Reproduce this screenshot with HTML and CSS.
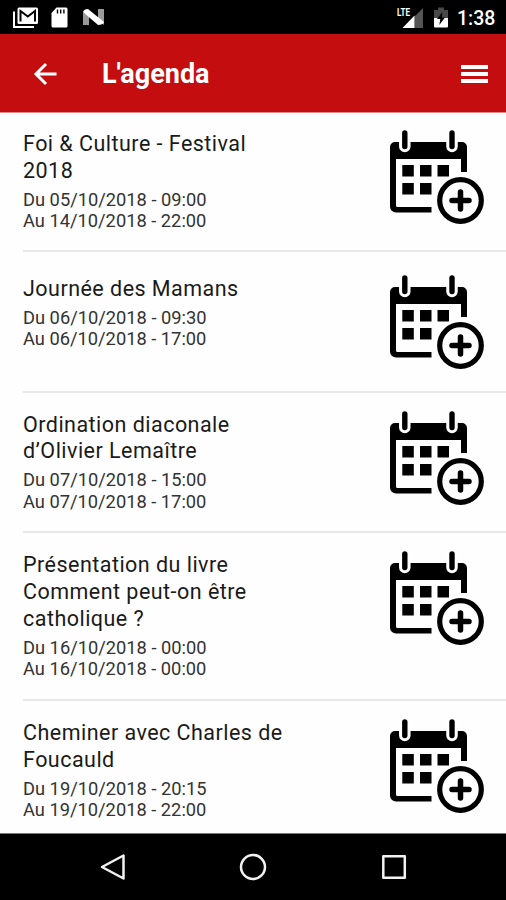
FILE: index.html
```html
<!DOCTYPE html>
<html lang="fr">

<head>
    <meta charset="UTF-8">
    <meta name="viewport" content="width=device-width, initial-scale=1.0">
    <title>L'agenda</title>
    <link rel="stylesheet" href="styles.css">
</head>

<body>
    <!-- Calendar icon shared by all the events -->
    <svg class="sprite" width="0" height="0">
        <symbol id="calendar-add" viewBox="0 0 94 94">
            <path d="M5 12h67a5 5 0 0 1 5 5v25h-6V29H6v46.500a1.500 1.500 0 0 0 1.500 1.500H41.500v5.500H6a6 6 0 0 1-6-6V17a5 5 0 0 1 5-5z" />
            <g stroke="#fff" stroke-width="11.500" stroke-linecap="round">
                <path d="M14.800 3v13.500M62 3v13.500" />
            </g>
            <g stroke="#000" stroke-width="5.400" stroke-linecap="round">
                <path d="M14.800 3v13.500M62 3v13.500" />
            </g>
            <path d="M12.300 35h11.500v11.500h-11.500zM30 35h11.500v11.500H30zM47.500 35h11.500v11.500H47.500zM12.300 53h11.500v11.500h-11.500zM30 53h11.500v11.500H30z" />
            <circle cx="70.500" cy="70.500" r="26" fill="#fff" />
            <circle cx="70.500" cy="70.500" r="20.800" fill="#fff" stroke="#000" stroke-width="5.200" />
            <path d="M70.500 62v17M62 70.500h17" stroke="#000" stroke-width="5.500" stroke-linecap="round" />
        </symbol>
    </svg>

    <div class="status-bar">
        <svg class="status-left" width="110" height="34" viewBox="0 0 110 34">
            <path d="M14 11.500V27h20" fill="none" stroke="#fff" stroke-width="2" />
            <rect x="17.500" y="7.500" width="20.500" height="16.500" rx="1.500" fill="#fff" />
            <path d="M20.500 21.500V11l7.300 5.500L35 11v10.500" fill="none" stroke="#000" stroke-width="2" />
            <path d="M56.500 7.500H66a1.500 1.500 0 0 1 1.500 1.500v17a1.500 1.500 0 0 1-1.500 1.500H53a1.500 1.500 0 0 1-1.500-1.500V13z" fill="#fff" />
            <path d="M57.500 9.500v4M60.700 9.500v4M63.900 9.500v4" stroke="#000" stroke-width="1.400" />
            <path d="M83 12l6 4v9h-6zM98 9h6v16l-6-5z" fill="#999" />
            <path d="M83 12q1-3 5-3l16 13q-1 3-6 3z" fill="#fff" />
        </svg>
        <svg class="status-right" width="55" height="34" viewBox="0 0 55 34">
            <path d="M26 8v20H17.500V16.500z" fill="#555" />
            <path d="M17.500 15.500V28H5.500z" fill="#fff" />
            <text class="lte" x="0" y="16" textLength="13" lengthAdjust="spacingAndGlyphs">LTE</text>
            <path d="M37 10h4V7.500h6V10h4v8H37z" fill="#484848" />
            <path d="M37 18h14v8.500a1 1 0 0 1-1 1H38a1 1 0 0 1-1-1z" fill="#fff" />
            <path d="M45.500 12l-5.500 7h3.300l-1 6 5.700-7.500h-3.200z" fill="#000" />
        </svg>
        <span class="clock">1:38</span>
    </div>

    <header>
        <svg class="back" width="24" height="24" viewBox="0 0 24 24">
            <path d="M23.500 12H3M13 2L3 12l10 10" fill="none" stroke="#fff" stroke-width="3" />
        </svg>
        <h1>L'agenda</h1>
        <div class="menu">
            <span></span>
            <span></span>
            <span></span>
        </div>
    </header>

    <main>
        <div class="event first">
            <div class="event-text">
                <h2>Foi &amp; Culture - Festival<br>2018</h2>
                <p>Du 05/10/2018 - 09:00</p>
                <p>Au 14/10/2018 - 22:00</p>
            </div>
            <svg class="calendar"><use href="#calendar-add" /></svg>
        </div>
        <div class="event short">
            <div class="event-text">
                <h2>Journée des Mamans</h2>
                <p>Du 06/10/2018 - 09:30</p>
                <p>Au 06/10/2018 - 17:00</p>
            </div>
            <svg class="calendar"><use href="#calendar-add" /></svg>
        </div>
        <div class="event">
            <div class="event-text">
                <h2>Ordination diaconale<br>d’Olivier Lemaître</h2>
                <p>Du 07/10/2018 - 15:00</p>
                <p>Au 07/10/2018 - 17:00</p>
            </div>
            <svg class="calendar"><use href="#calendar-add" /></svg>
        </div>
        <div class="event">
            <div class="event-text">
                <h2>Présentation du livre<br>Comment peut-on être<br>catholique ?</h2>
                <p>Du 16/10/2018 - 00:00</p>
                <p>Au 16/10/2018 - 00:00</p>
            </div>
            <svg class="calendar"><use href="#calendar-add" /></svg>
        </div>
        <div class="event">
            <div class="event-text">
                <h2>Cheminer avec Charles de<br>Foucauld</h2>
                <p>Du 19/10/2018 - 20:15</p>
                <p>Au 19/10/2018 - 22:00</p>
            </div>
            <svg class="calendar"><use href="#calendar-add" /></svg>
        </div>
    </main>

    <nav>
        <svg width="28" height="28" viewBox="0 0 28 28">
            <path d="M24.500 2.500v23L3 14z" />
        </svg>
        <svg width="28" height="28" viewBox="0 0 28 28">
            <circle cx="14" cy="14" r="12" />
        </svg>
        <svg width="28" height="28" viewBox="0 0 28 28">
            <rect x="3.300" y="3.300" width="21.500" height="21.500" />
        </svg>
    </nav>
</body>

</html>
```
FILE: styles.css
```css
/* General Styles */
* {
    box-sizing: border-box;
}

body {
    margin: 0;
    height: 900px;
    font-family: Roboto, 'Liberation Sans', sans-serif;
    background-color: #FEFEFE;
    color: #1A1A1A;
    display: flex;
    flex-direction: column;
    overflow: hidden;
}

svg {
    display: block;
    flex: none;
}

.sprite {
    position: absolute;
}

/* Status bar */
.status-bar {
    display: flex;
    flex: none;
    height: 34px;
    background-color: #000000;
    color: #FFFFFF;
}

.status-right {
    margin-left: auto;
}

.lte {
    font-size: 11px;
    font-weight: 700;
    fill: #FFFFFF;
}

.clock {
    width: 54px;
    padding-left: 5px;
    font-size: 19.5px;
    font-weight: 500;
    line-height: 37px;
}

/* Header */
header {
    display: flex;
    align-items: center;
    flex: none;
    height: 79px;
    padding: 1px 18px 0 33px;
    background-color: #C40D0F;
    border-bottom: 1px solid #E58A8A;
    color: #FFFFFF;
}

header h1 {
    margin: 1px 0 0 45px;
    font-size: 27px;
    font-weight: 700;
    line-height: 32px;
}

.menu {
    display: flex;
    flex-direction: column;
    gap: 3px;
    width: 27px;
    margin-left: auto;
}

.menu span {
    height: 4px;
    background-color: #FFFFFF;
}

/* Events */
main {
    flex: 1;
    min-height: 0;
    overflow: hidden;
}

.event {
    display: flex;
    justify-content: space-between;
    margin-left: 23px;
    padding: 18px 22px 19.3px 0;
    border-bottom: 2px solid #E9E9E9;
}

.event.first {
    padding-top: 17px;
    padding-bottom: 18.5px;
}

.event.short {
    padding-top: 22.5px;
    padding-bottom: 22px;
}

.event-text {
    padding-top: 1px;
}

.event h2 {
    margin: 0 0 4.5px;
    font-size: 21.5px;
    font-weight: 400;
    line-height: 26.7px;
    letter-spacing: 0.47px;
}

.event p {
    margin: 0;
    font-size: 18.3px;
    line-height: 21.3px;
    color: #333333;
}

.calendar {
    width: 94px;
    height: 94px;
}

/* Navigation bar */
nav {
    display: flex;
    align-items: center;
    justify-content: center;
    gap: 112.5px;
    flex: none;
    height: 67px;
    background-color: #000000;
    border-top: 1px solid #777777;
}

nav svg {
    fill: none;
    stroke: #F2F2F2;
    stroke-width: 2.5;
    stroke-linejoin: round;
}
```
